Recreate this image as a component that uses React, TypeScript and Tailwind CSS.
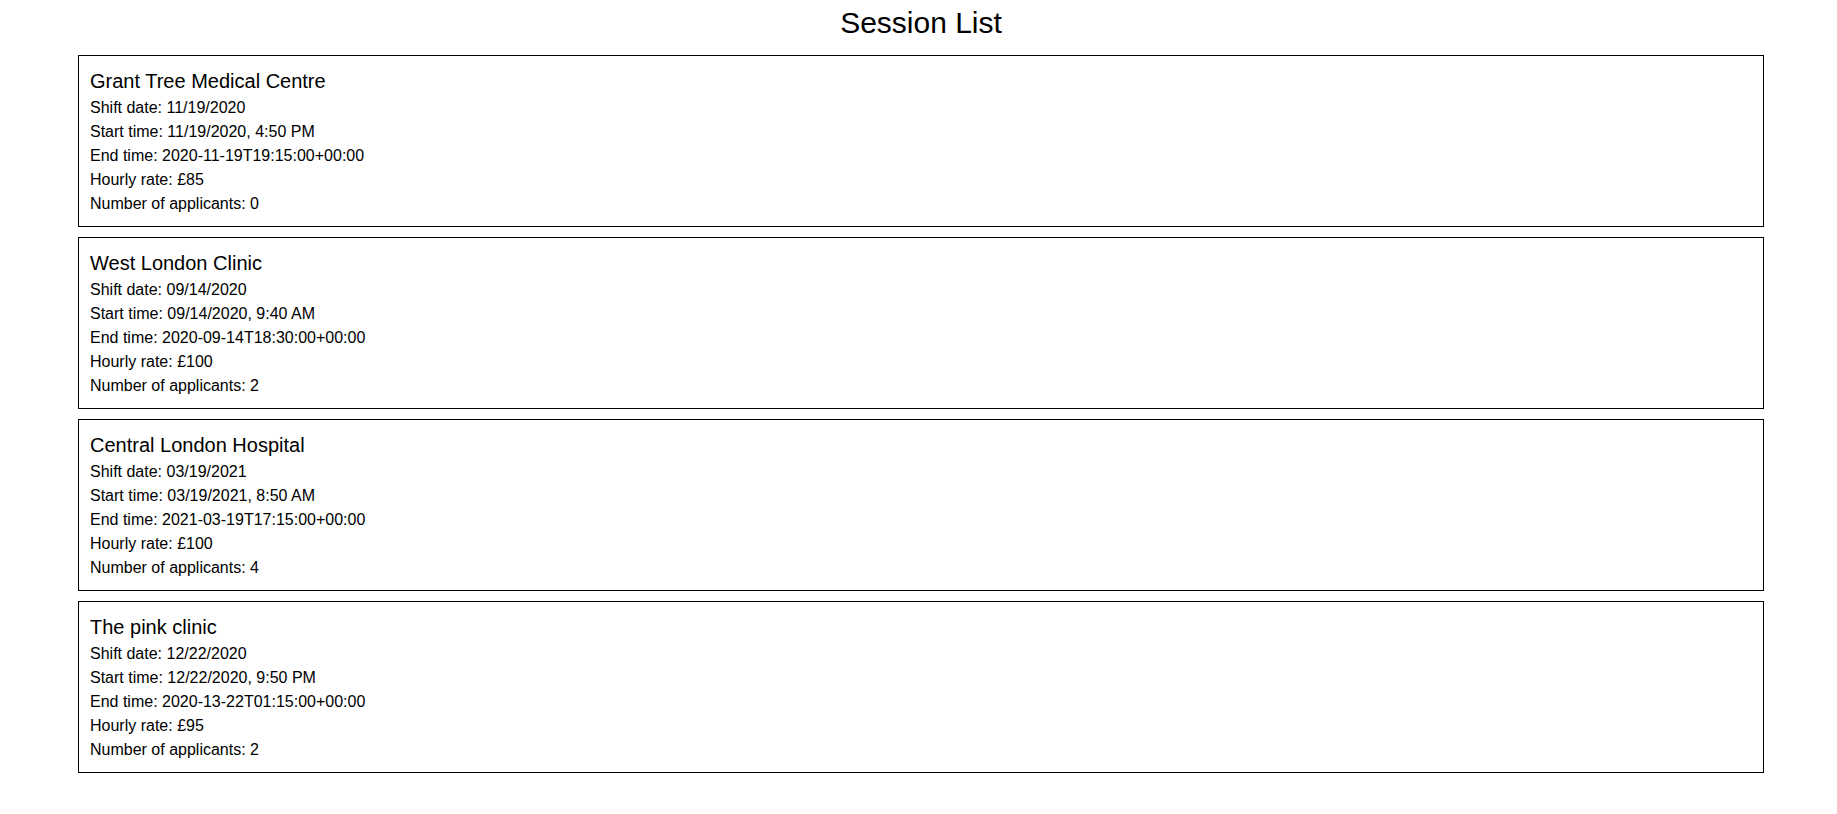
import React from "react";

type Session = {
  name: string;
  shiftDate: string;
  startTime: string;
  endTime: string;
  rate: string;
  applicants: number;
};

const sessions: Session[] = [
  {
    name: "Grant Tree Medical Centre",
    shiftDate: "11/19/2020",
    startTime: "11/19/2020, 4:50 PM",
    endTime: "2020-11-19T19:15:00+00:00",
    rate: "£85",
    applicants: 0,
  },
  {
    name: "West London Clinic",
    shiftDate: "09/14/2020",
    startTime: "09/14/2020, 9:40 AM",
    endTime: "2020-09-14T18:30:00+00:00",
    rate: "£100",
    applicants: 2,
  },
  {
    name: "Central London Hospital",
    shiftDate: "03/19/2021",
    startTime: "03/19/2021, 8:50 AM",
    endTime: "2021-03-19T17:15:00+00:00",
    rate: "£100",
    applicants: 4,
  },
  {
    name: "The pink clinic",
    shiftDate: "12/22/2020",
    startTime: "12/22/2020, 9:50 PM",
    endTime: "2020-13-22T01:15:00+00:00",
    rate: "£95",
    applicants: 2,
  },
];

function SessionCard({ session }: { session: Session }) {
  return (
    <div className="border border-black py-[10px] px-[11px]">
      <h2 className="text-xl leading-[30px] font-normal">{session.name}</h2>
      <p className="text-base leading-6">Shift date: {session.shiftDate}</p>
      <p className="text-base leading-6">Start time: {session.startTime}</p>
      <p className="text-base leading-6">End time: {session.endTime}</p>
      <p className="text-base leading-6">Hourly rate: {session.rate}</p>
      <p className="text-base leading-6">
        Number of applicants: {session.applicants}
      </p>
    </div>
  );
}

export default function App() {
  return (
    <div className="min-h-screen bg-white text-black font-['Liberation_Sans',Arial,sans-serif]">
      <div className="ml-[78px] w-[1686px]">
        <h1 className="text-center text-[30px] leading-[45px] font-normal mb-[10px]">
          Session List
        </h1>
        <div className="flex flex-col gap-[10px]">
          {sessions.map((s) => (
            <SessionCard key={s.name} session={s} />
          ))}
        </div>
      </div>
    </div>
  );
}
